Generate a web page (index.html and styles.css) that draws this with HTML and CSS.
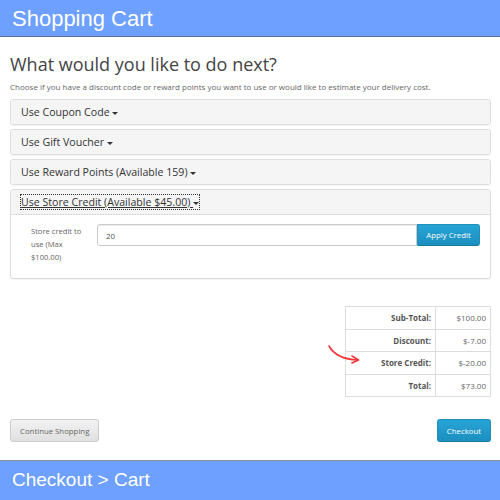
FILE: index.html
```html
<!DOCTYPE html>
<html lang="en">
<head>
  <meta charset="UTF-8" />
  <title>Shopping Cart</title>
  <link rel="stylesheet" href="styles.css">
</head>
<body>
  <header class="banner banner-top">Shopping Cart</header>

  <main class="container">
    <h1>What would you like to do next?</h1>
    <p class="lead">Choose if you have a discount code or reward points you want to use or would like to estimate your delivery cost.</p>

    <div class="panel">
      <div class="panel-heading"><span class="toggle">Use Coupon Code <i class="caret"></i></span></div>
    </div>
    <div class="panel">
      <div class="panel-heading"><span class="toggle">Use Gift Voucher <i class="caret"></i></span></div>
    </div>
    <div class="panel">
      <div class="panel-heading"><span class="toggle">Use Reward Points (Available 159) <i class="caret"></i></span></div>
    </div>
    <div class="panel">
      <div class="panel-heading"><span class="toggle active">Use Store Credit (Available $45.00) <i class="caret"></i></span></div>
      <div class="panel-body">
        <label class="credit-label" for="credit">Store credit to use (Max $100.00)</label>
        <div class="input-group">
          <input type="text" id="credit" value="20" />
          <button class="btn btn-primary">Apply Credit</button>
        </div>
      </div>
    </div>

    <div class="totals-row">
      <!-- red pointer drawn over the empty left side of the label cell -->
      <svg class="arrow" viewBox="0 0 34 20" width="34" height="20">
        <path d="M2 2 Q 9 15, 31 16" fill="none" stroke="#f2383a" stroke-width="1.6" stroke-linecap="round" />
        <path d="M25 12 L31.5 16 L25 19" fill="none" stroke="#f2383a" stroke-width="1.6" stroke-linecap="round" stroke-linejoin="round" />
      </svg>
      <table class="totals">
        <tr><td class="label">Sub-Total:</td><td>$100.00</td></tr>
        <tr><td class="label">Discount:</td><td>$-7.00</td></tr>
        <tr><td class="label">Store Credit:</td><td>$-20.00</td></tr>
        <tr><td class="label">Total:</td><td>$73.00</td></tr>
      </table>
    </div>

    <div class="buttons">
      <button class="btn btn-default">Continue Shopping</button>
      <button class="btn btn-primary">Checkout</button>
    </div>
  </main>

  <footer class="banner banner-bottom">Checkout &gt; Cart</footer>
</body>
</html>
```

FILE: styles.css
```css
body {
  margin: 0;
  font-family: 'Open Sans', sans-serif;
  color: #666;
  background: #fff;
  width: 500px;
  height: 500px;
  display: flex;
  flex-direction: column;
}

.banner {
  background-color: #6ea0ff;
  color: #fff;
  font-family: 'Liberation Sans', Arial, sans-serif;
  padding-left: 12px;
}

.banner-top {
  height: 36px;
  line-height: 37px;
  font-size: 22px;
  border-bottom: 1px solid #5a6e96;
}

.banner-bottom {
  margin-top: auto;
  height: 39px;
  line-height: 38px;
  font-size: 19px;
  border-top: 1px solid #8a8f99;
}

.container {
  padding: 0 9px 0 10px;
}

h1 {
  font-size: 18px;
  font-weight: 400;
  color: #444;
  margin: 14px 0 3px;
  line-height: 26px;
}

.lead {
  font-size: 8px;
  margin: 0 0 5px;
  line-height: 14px;
}

.panel {
  border: 1px solid #ddd;
  border-radius: 3px;
  margin-bottom: 4px;
  box-shadow: 0 1px 1px rgba(0, 0, 0, 0.05);
}

.panel-heading {
  background-color: #f5f5f5;
  height: 24px;
  padding: 0 10px;
  display: flex;
  align-items: center;
  font-size: 10.6px;
  color: #333;
  border-radius: 3px;
}

.panel-body {
  border-top: 1px solid #ddd;
  padding: 9px 10px 14px 20px;
  display: flex;
  align-items: flex-start;
}

.toggle.active {
  text-decoration: underline;
  outline: 1px dotted #333;
}

.caret {
  display: inline-block;
  width: 0;
  height: 0;
  border-top: 3px solid #333;
  border-left: 3px solid transparent;
  border-right: 3px solid transparent;
  vertical-align: middle;
}

.credit-label {
  width: 54px;
  font-size: 7.6px;
  line-height: 13px;
  padding-top: 1px;
  margin-right: 12px;
}

.input-group {
  flex: 1;
  display: flex;
}

.input-group input {
  flex: 1;
  height: 22px;
  box-sizing: border-box;
  border: 1px solid #ccc;
  border-radius: 3px 0 0 3px;
  padding: 0 8px;
  font: 8px 'Open Sans', sans-serif;
  color: #555;
  box-shadow: inset 0 1px 1px rgba(0, 0, 0, 0.075);
}

.btn {
  font-family: 'Open Sans', sans-serif;
  font-size: 7.8px;
  border-radius: 3px;
  padding: 0 9px;
  height: 23px;
  white-space: nowrap;
  cursor: pointer;
}

.btn-primary {
  color: #fff;
  background: linear-gradient(#27a4d6, #1b8fbf);
  border: 1px solid #1f90bb;
  border-bottom-color: #177aa1;
}

.input-group .btn {
  border-radius: 0 3px 3px 0;
  width: 63px;
  height: 22px;
  padding: 0;
}

.btn-default {
  color: #666;
  background: linear-gradient(#f2f2f2, #e0e0e0);
  border: 1px solid #ccc;
}

.totals-row {
  position: relative;
  display: flex;
  justify-content: flex-end;
  margin-top: 27px;
}

.arrow {
  position: absolute;
  left: 317px;
  top: 38px;
}

.totals {
  border-collapse: collapse;
  width: 146px;
  font-size: 8px;
}

.totals td {
  border: 1px solid #ddd;
  height: 21.5px;
  text-align: right;
  padding: 0 4px 0 8px;
}

.totals td.label {
  font-weight: 700;
  color: #555;
  width: 77px;
}

.buttons {
  display: flex;
  justify-content: space-between;
  margin-top: 22px;
}
```
